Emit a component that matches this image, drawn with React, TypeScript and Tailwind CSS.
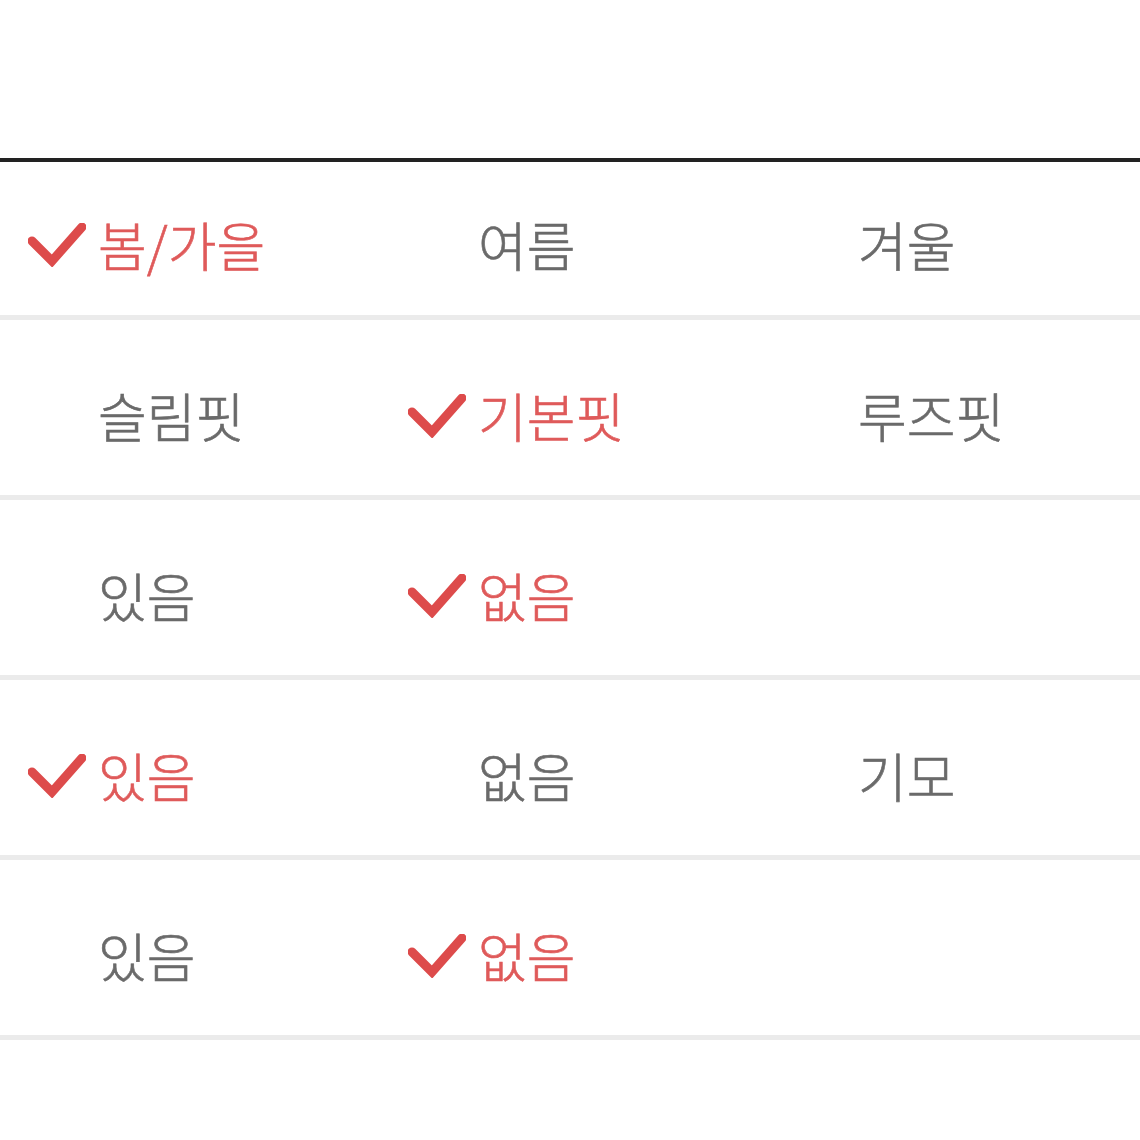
import React from "react";

type Cell = { label: string; checked?: boolean } | null;

const rows: { cells: Cell[]; first?: boolean }[] = [
  { first: true, cells: [{ label: "봄/가을", checked: true }, { label: "여름" }, { label: "겨울" }] },
  { cells: [{ label: "슬림핏" }, { label: "기본핏", checked: true }, { label: "루즈핏" }] },
  { cells: [{ label: "있음" }, { label: "없음", checked: true }, null] },
  { cells: [{ label: "있음", checked: true }, { label: "없음" }, { label: "기모" }] },
  { cells: [{ label: "있음" }, { label: "없음", checked: true }, null] },
];

function Check() {
  return (
    <svg width="58" height="44" viewBox="0 0 58 44" className="shrink-0">
      <polyline
        points="4,18 24,38 54,4"
        fill="none"
        stroke="#dd4b4b"
        strokeWidth="9"
        strokeLinejoin="miter"
        strokeLinecap="round"
      />
    </svg>
  );
}

export default function App() {
  return (
    <div
      className="w-[1140px] h-[1140px] bg-white overflow-hidden"
      style={{ fontFamily: '"Noto Sans CJK KR", "Noto Sans", sans-serif' }}
    >
      <div className="h-[158px]" />
      <div className="h-[4px] bg-[#222222]" />
      {rows.map((row, i) => (
        <div key={i}>
          <div className={`flex ${row.first ? "h-[153px] pt-[12px]" : "h-[175px] pt-[16px]"}`}>
            {row.cells.map((c, j) => (
              <div key={j} className="w-[382px] pl-[28px] flex items-center">
                {c && (
                  <div className="flex items-center">
                    <div className="w-[70px] flex items-center">{c.checked && <Check />}</div>
                    <span
                      className={`text-[53px] leading-none font-light ${
                        c.checked ? "text-[#df5a5a]" : "text-[#6a6a6a]"
                      }`}
                      style={{ WebkitTextStroke: "0.6px currentColor" }}
                    >
                      {c.label}
                    </span>
                  </div>
                )}
              </div>
            ))}
          </div>
          <div className="h-[5px] bg-[#ebebeb]" />
        </div>
      ))}
    </div>
  );
}
